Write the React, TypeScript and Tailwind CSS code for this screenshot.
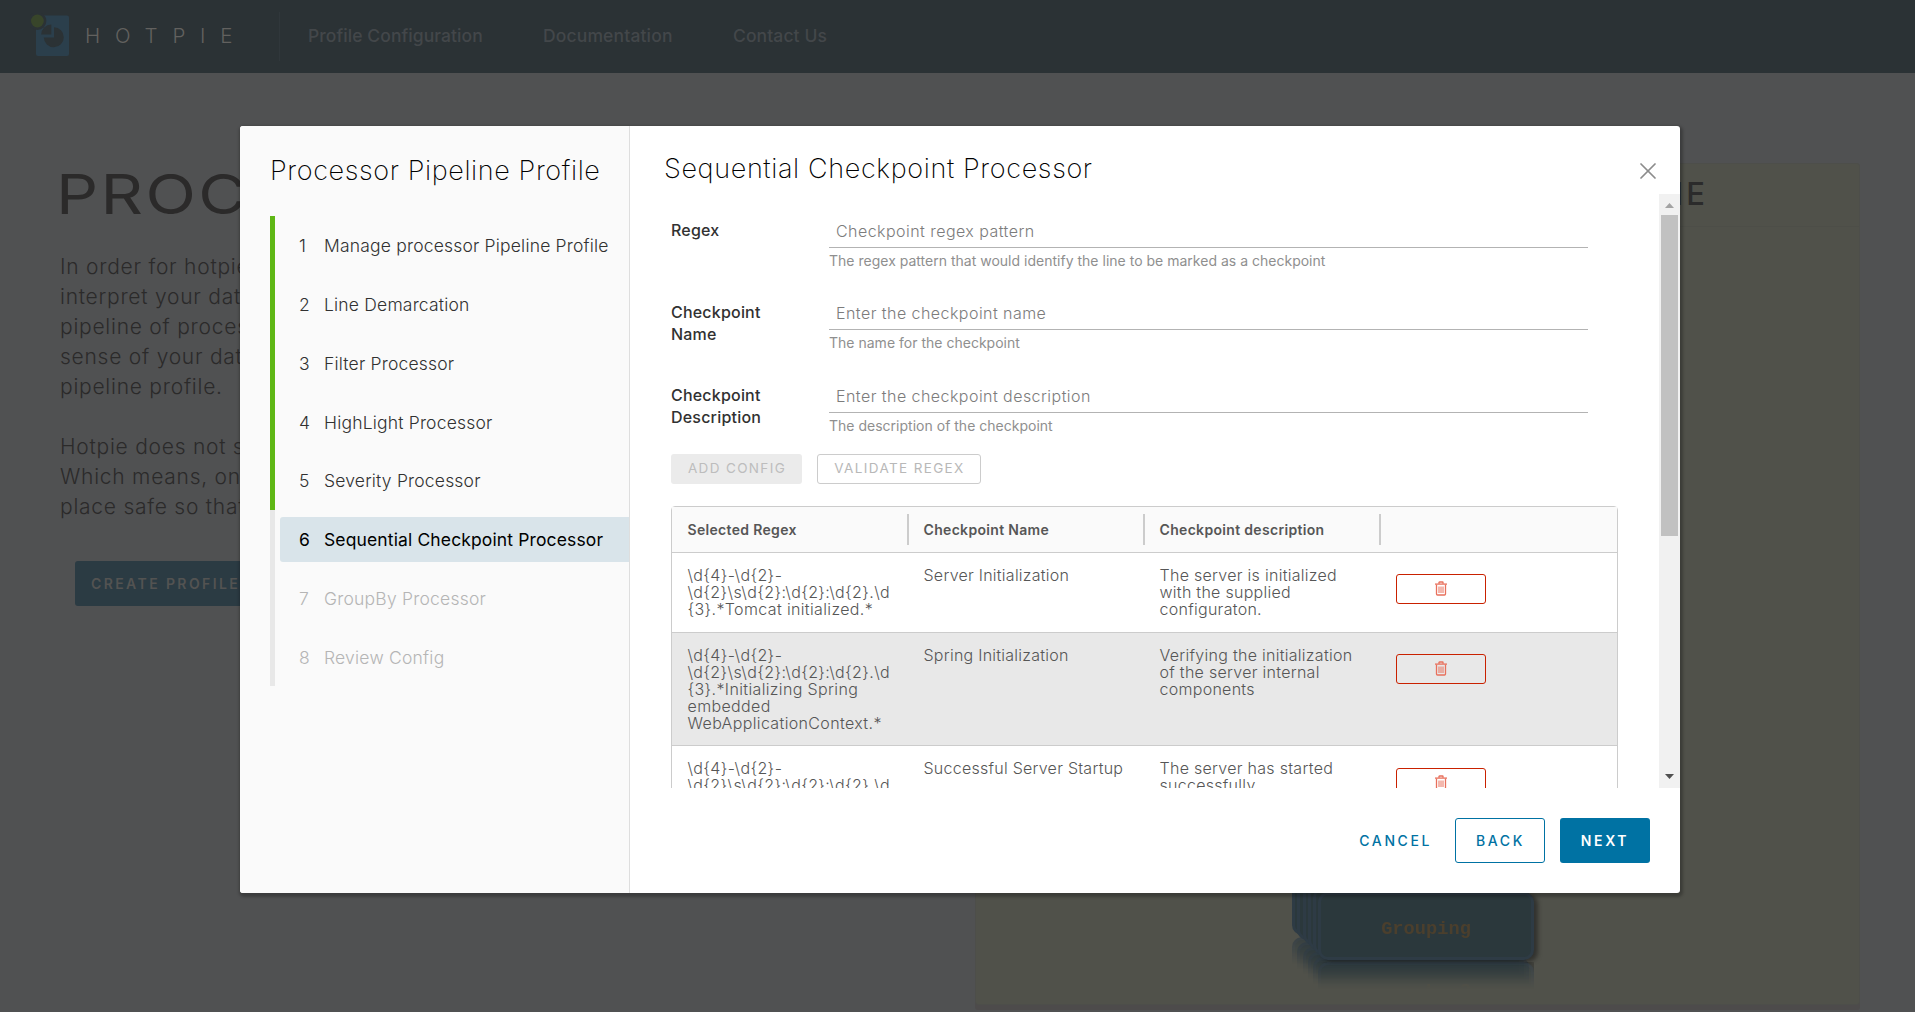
import { X } from "lucide-react";

const steps = [
  "Manage processor Pipeline Profile",
  "Line Demarcation",
  "Filter Processor",
  "HighLight Processor",
  "Severity Processor",
  "Sequential Checkpoint Processor",
  "GroupBy Processor",
  "Review Config",
];
const CURRENT = 5;

const fields = [
  {
    label: ["Regex"],
    placeholder: "Checkpoint regex pattern",
    help: "The regex pattern that would identify the line to be marked as a checkpoint",
  },
  {
    label: ["Checkpoint", "Name"],
    placeholder: "Enter the checkpoint name",
    help: "The name for the checkpoint",
  },
  {
    label: ["Checkpoint", "Description"],
    placeholder: "Enter the checkpoint description",
    help: "The description of the checkpoint",
  },
];

const rows = [
  {
    regex: ["\\d{4}-\\d{2}-", "\\d{2}\\s\\d{2}:\\d{2}:\\d{2}.\\d", "{3}.*Tomcat initialized.*"],
    name: "Server Initialization",
    desc: ["The server is initialized", "with the supplied", "configuraton."],
    style: "h-20 bg-white",
    button: "mt-[21px]",
  },
  {
    regex: [
      "\\d{4}-\\d{2}-",
      "\\d{2}\\s\\d{2}:\\d{2}:\\d{2}.\\d",
      "{3}.*Initializing Spring",
      "embedded",
      "WebApplicationContext.*",
    ],
    name: "Spring Initialization",
    desc: ["Verifying the initialization", "of the server internal", "components"],
    style: "h-[113px] bg-[#e8e8e8]",
    button: "mt-[21px]",
  },
  {
    regex: ["\\d{4}-\\d{2}-", "\\d{2}\\s\\d{2}:\\d{2}:\\d{2}.\\d"],
    name: "Successful Server Startup",
    desc: ["The server has started", "successfully."],
    style: "h-20 bg-white",
    button: "mt-[22px]",
  },
];

function Lines({ items, className = "" }: { items: string[]; className?: string }) {
  return (
    <div className={className}>
      {items.map((t) => (
        <div key={t} className="whitespace-nowrap">
          {t}
        </div>
      ))}
    </div>
  );
}

function Logo() {
  return (
    <svg width="40" height="44" viewBox="0 0 40 44" className="mb-1 shrink-0">
      <rect x="6" y="2.5" width="33" height="40.5" rx="2" fill="#2b3f4c" />
      <circle cx="7.4" cy="8" r="9" fill="#2b3235" />
      <circle cx="7.4" cy="8" r="6.4" fill="#38452a" />
      <path d="M24 14.2V24.5H13.8A10 10 0 1 0 24 14.2Z" fill="#2b3235" />
      <path d="M21.3 11.5V21.5H11.2A10 10 0 0 1 21.3 11.5Z" fill="#2b3235" />
    </svg>
  );
}

function Trash() {
  return (
    <svg width="12" height="15" viewBox="0 0 12 15" fill="none" stroke="#e8705c" strokeWidth="1" className="mr-px mb-px">
      <path d="M0 3.1H12" strokeWidth="1.3" />
      <path d="M4 2.8V1.5Q4 1 4.5 1H7.5Q8 1 8 1.5V2.8" strokeWidth="1.4" />
      <path d="M1.5 3.5V13Q1.5 14 2.5 14H9.5Q10.5 14 10.5 13V3.5" strokeWidth="1.3" />
      <path d="M4 5.5V12M6 5.5V12M8 5.5V12" />
    </svg>
  );
}

function Header() {
  return (
    <header className="flex h-[73px] items-center bg-[#2b3235] pl-[30px]">
      <Logo />
      <span className="mb-0.5 ml-[15px] w-[194px] text-[20.5px] leading-6 font-light tracking-[14.8px] text-[#62615f]">
        HOTPIE
      </span>
      <span className="h-[49px] w-px bg-[#30373b]" />
      <nav className="mb-0.5 ml-7 flex text-[17.5px] leading-6 font-medium text-[#43474a]">
        <span className="w-[235px] tracking-[0.08px]">Profile Configuration</span>
        <span className="w-[190px] tracking-[0.15px]">Documentation</span>
        <span className="tracking-[0.1px]">Contact Us</span>
      </nav>
    </header>
  );
}

const stack = [
  "left-0 top-0",
  "left-[5px] top-[5px]",
  "left-[11px] top-[10px]",
  "left-4 top-[15px]",
  "left-[21px] top-5",
  "left-[26px] top-[25px] shadow-[4px_2px_4px_rgba(20,20,20,0.5)]",
];

function Page() {
  return (
    <main className="flex h-[939px] justify-between overflow-hidden pr-[55px] pl-[60px]">
      <section className="flex w-[640px] flex-col items-start pt-[88px] text-[#2b2a2a]">
        <h1 className="-ml-1 origin-left scale-x-[1.2] text-[55px] leading-[66px] font-normal tracking-[2px]">PROC</h1>
        <div className="mt-[25px] text-[21px] leading-[30px] font-light tracking-[0.75px]">
          <p>In order for hotpie to</p>
          <p>interpret your data, a</p>
          <p>pipeline of processors</p>
          <p>sense of your data is a</p>
          <p>pipeline profile.</p>
          <p className="mt-[30px]">Hotpie does not store</p>
          <p>Which means, once it</p>
          <p>place safe so that you</p>
        </div>
        <button className="mt-[39px] ml-[15px] h-[45px] rounded-[3px] bg-[#2b3b43] px-4 text-[14px] leading-[45px] font-semibold tracking-[2.4px] text-[#535352]">
          CREATE PROFILE
        </button>
      </section>

      <section className="mt-[90px] h-[842px] w-[885px] rounded-[3px] border border-[#4d4e4a] bg-[#50514a] shadow-[0_5px_0_#4d4b4b]">
        <div className="flex h-[63px] items-center justify-end border-b border-[#4d4e48] pr-[151px] pb-0.5 text-[31px] font-medium tracking-[3px] text-[#2b2b2b]">
          PIPELINE
        </div>
        <div className="relative mt-[640px] ml-[316px] h-[93px] w-[241px]">
          {stack.map((pos, i) => (
            <div
              key={pos}
              className={
                "absolute flex h-[68px] w-[216px] items-center justify-center rounded-[10px] border-[3px] border-[#2e3b45] bg-[#2b383c] [-webkit-box-reflect:below_2px_linear-gradient(transparent_60%,rgba(255,255,255,0.7))] " +
                pos
              }
            >
              {i === stack.length - 1 && (
                <span className="pt-1.5 font-['Liberation_Mono'] text-[18.7px] font-bold text-[#4b3f2d]">Grouping</span>
              )}
            </div>
          ))}
        </div>
      </section>
    </main>
  );
}

function Sidebar() {
  return (
    <aside className="flex w-[390px] shrink-0 flex-col border-r border-[#dedede] bg-[#fafafa] pt-[27px] pl-[30px]">
      <h2 className="text-[27px] leading-9 font-extralight tracking-[0.62px] whitespace-nowrap text-black">
        Processor Pipeline Profile
      </h2>
      <ol className="mt-[27px]">
        {steps.map((s, i) => (
          <li
            key={s}
            className={
              "flex h-[58.8px] items-center border-l-[5px] pl-[5px] " +
              (i < CURRENT ? "border-[#5eb715]" : "border-[#e8e8e8]")
            }
          >
            <div
              className={
                "flex h-[45px] w-full items-center rounded-l-[3px] pt-0.5 pl-[19px] text-[17.5px] whitespace-nowrap " +
                (i < CURRENT
                  ? "font-light tracking-[0.19px] text-[#313131]"
                  : i === CURRENT
                    ? "bg-[#d9e4ea] font-normal tracking-[0.13px] text-black"
                    : "font-light tracking-[0.22px] text-[#b5b5b5]")
              }
            >
              <span className="w-[25px]">{i + 1}</span>
              <span>{s}</span>
            </div>
          </li>
        ))}
      </ol>
    </aside>
  );
}

function ConfigTable() {
  return (
    <div className="mt-[22px] w-[947px] rounded-t-[4px] border border-[#cccccc] text-[#565656]">
      <div className="grid h-[46px] grid-cols-[236px_236px_236px_1fr] border-b border-[#cccccc] bg-[#fafafa] text-[14px] font-semibold tracking-[0.32px]">
        {["Selected Regex", "Checkpoint Name", "Checkpoint description"].map((h) => (
          <div key={h} className="flex items-center justify-between pl-[15.5px]">
            <span className="pb-px">{h}</span>
            <span className="-mr-px h-[31px] w-0.5 bg-[#cccccc]" />
          </div>
        ))}
      </div>
      {rows.map((r) => (
        <div
          key={r.name}
          className={
            "grid grid-cols-[236px_236px_236px_1fr] border-b border-[#cccccc] text-[16px] leading-[17px] font-light " +
            r.style
          }
        >
          <Lines items={r.regex} className="pt-[14px] pl-[15.5px] tracking-[0.36px]" />
          <Lines items={[r.name]} className="pt-[14px] pl-[15.5px] tracking-[0.25px]" />
          <Lines items={r.desc} className="pt-[14px] pl-[15.5px] tracking-[0.28px]" />
          <button
            className={
              "ml-4 flex h-[30px] w-[90px] items-center justify-center rounded-[3px] border border-[#c92100] " + r.button
            }
          >
            <Trash />
          </button>
        </div>
      ))}
    </div>
  );
}

function Scrollbar() {
  return (
    <div className="flex w-[21px] shrink-0 flex-col items-center bg-[#f1f1f1]">
      <svg width="21" height="21" viewBox="0 0 21 21">
        <path d="M6 14L10.5 9L15 14Z" fill="#a3a3a3" />
      </svg>
      <div className="h-[321px] w-[17px] bg-[#c1c1c1]" />
      <svg width="21" height="21" viewBox="0 0 21 21" className="mt-auto">
        <path d="M6 7H15L10.5 12Z" fill="#505050" />
      </svg>
    </div>
  );
}

function Wizard() {
  return (
    <div className="flex h-[767px] w-[1440px] overflow-hidden rounded-[3px] bg-white shadow-[1px_2px_3px_2px_rgba(0,0,0,0.25)]">
      <Sidebar />
      <div className="flex flex-1 flex-col">
        <div className="flex h-[68px] items-start justify-between pr-[18px] pl-[34px]">
          <h2 className="pt-[25px] text-[27px] leading-9 font-extralight tracking-[0.64px] text-black">
            Sequential Checkpoint Processor
          </h2>
          <X className="mt-[31px] h-7 w-7 text-[#8c8c8c]" strokeWidth={1.5} absoluteStrokeWidth />
        </div>
        <div className="flex h-[594px] overflow-hidden">
          <div className="flex-1 pt-[25px] pl-[41px]">
            <div className="grid grid-rows-[82px_83px_70px]">
              {fields.map((f) => (
                <div key={f.placeholder} className="grid grid-cols-[158px_759px] items-start">
                  <Lines
                    items={f.label}
                    className="text-[16px] leading-[22px] font-medium tracking-[0.2px] text-[#313131]"
                  />
                  <div>
                    <div className="h-[29px] border-b border-[#b3b3b3] pl-[7px] text-[16px] leading-6 font-light tracking-[0.45px] text-[#7c7c7c]">
                      {f.placeholder}
                    </div>
                    <div className="text-[14px] leading-[26px] font-normal tracking-[0.01px] text-[#8f8f8f]">
                      {f.help}
                    </div>
                  </div>
                </div>
              ))}
            </div>
            <div className="flex gap-[15px] text-[13.5px] tracking-[1.36px]">
              <button className="h-[30px] w-[131px] rounded-[3px] bg-[#ebebeb] pb-0.5 pl-px text-[#bdbdbd]">
                ADD CONFIG
              </button>
              <button className="h-[30px] w-[164px] rounded-[3px] border border-[#cccccc] pb-0.5 pl-px text-[#b8b8b8]">
                VALIDATE REGEX
              </button>
            </div>
            <ConfigTable />
          </div>
          <Scrollbar />
        </div>
        <div className="flex items-start justify-end gap-[15px] pt-[30px] pr-[30px] text-[14px] font-medium">
          <button className="h-[45px] pr-2 tracking-[2.6px] text-[#0072a3]">CANCEL</button>
          <button className="h-[45px] w-[90px] rounded-[3px] border border-[#0072a3] pl-px tracking-[2.6px] text-[#0072a3]">
            BACK
          </button>
          <button className="h-[45px] w-[90px] rounded-[3px] bg-[#0072a3] font-semibold tracking-[2.6px] text-white">
            NEXT
          </button>
        </div>
      </div>
    </div>
  );
}

export default function App() {
  return (
    <div className="relative h-[1012px] w-[1915px] overflow-hidden bg-[#505152] font-['Inter',sans-serif]">
      <Header />
      <Page />
      <div className="absolute top-[126px] left-[240px]">
        <Wizard />
      </div>
    </div>
  );
}
